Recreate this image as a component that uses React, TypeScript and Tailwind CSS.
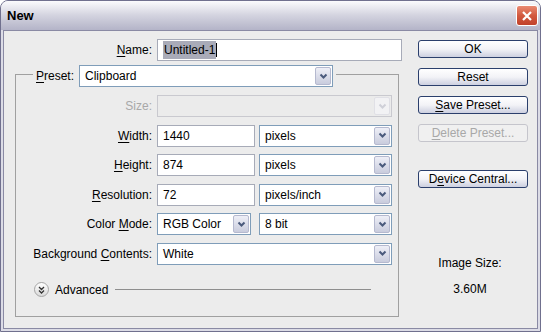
import React from "react";

const Chevron = ({ disabled }: { disabled?: boolean }) => (
  <svg width="9" height="7" viewBox="0 0 9 7">
    <path
      d="M1.5 1.5 L4.5 4.5 L7.5 1.5"
      stroke={disabled ? "#cfd0d8" : "#4a5a7c"}
      strokeWidth="2"
      fill="none"
    />
  </svg>
);

const Select = ({
  value,
  className = "",
  disabled,
}: {
  value?: string;
  className?: string;
  disabled?: boolean;
}) => (
  <div
    className={`flex h-[22px] items-stretch border ${
      disabled ? "border-[#c9c9cf] bg-[#ebebeb]" : "border-[#7f9db9] bg-white"
    } ${className}`}
  >
    <div className="flex flex-1 items-center pl-[5px]">{value}</div>
    <div
      className={`m-[1px] flex w-[16px] items-center justify-center rounded-[2px] border ${
        disabled
          ? "border-[#e0e0e6] bg-[#f2f2f4]"
          : "border-[#b5b9cf] bg-linear-to-b from-[#eeeff7] to-[#c9ccdd]"
      }`}
    >
      <Chevron disabled={disabled} />
    </div>
  </div>
);

const Input = ({ value, className = "" }: { value: string; className?: string }) => (
  <div className={`flex h-[22px] items-center border border-[#a7abb8] bg-white pl-[5px] ${className}`}>
    {value}
  </div>
);

const Row = ({ label, children }: { label: React.ReactNode; children: React.ReactNode }) => (
  <div className="flex h-[22px] items-center">
    <div className="w-[136px] text-right">{label}</div>
    <div className="ml-[5px] flex gap-[4px]">{children}</div>
  </div>
);

const Button = ({
  children,
  disabled,
  className = "",
}: {
  children: React.ReactNode;
  disabled?: boolean;
  className?: string;
}) => (
  <div
    className={`flex h-[18px] w-[110px] items-center justify-center rounded-[3px] border ${
      disabled
        ? "border-[#c5c5cc] bg-[#f0f0f0] text-[#a8a8a8]"
        : "border-[#2b3f6c] bg-linear-to-b from-white via-[#f3f3f7] to-[#cdd0e0]"
    } ${className}`}
  >
    {children}
  </div>
);

const U = ({ children }: { children: React.ReactNode }) => (
  <span className="underline underline-offset-[2px]">{children}</span>
);

export default function App() {
  return (
    <div className="h-[332px] w-[541px] overflow-hidden rounded-t-[8px] border border-[#70708e] bg-[#dcdce6] font-['Liberation_Sans',Arial,sans-serif] text-[12px] text-black">
      {/* title bar */}
      <div className="flex h-[29px] items-center justify-between bg-linear-to-b from-[#fbfbfd] via-[#d3d3df] to-[#b4b4c8] pl-[6px] pr-[2px]">
        <span className="text-[13px] font-bold">New</span>
        <div className="flex h-[21px] w-[22px] items-center justify-center rounded-[3px] border border-white bg-linear-to-b from-[#e98a73] via-[#d2593f] to-[#c1412b]">
          <svg width="12" height="12" viewBox="0 0 12 12">
            <path d="M2 2 L10 10 M10 2 L2 10" stroke="white" strokeWidth="2.2" />
          </svg>
        </div>
      </div>

      <div className="px-[2px] pb-[2px]">
        <div className="flex h-[299px] border border-[#8a8aa4] bg-[#ececec]">
          {/* left column */}
          <div className="w-[404px] pt-[8px]">
            <div className="flex h-[22px] items-center">
              <div className="w-[148px] text-right">
                <U>N</U>ame:
              </div>
              <div className="ml-[5px] flex h-[22px] w-[245px] items-center border border-[#a7abb8] bg-white pl-[5px]">
                <span className="bg-[#a9abb8] px-[1px]">Untitled-1</span>
                <span className="h-[14px] w-[1px] bg-black" />
              </div>
            </div>

            <fieldset className="ml-[11px] w-[384px] border border-[#a0a0a0] pb-[18px]">
              <legend className="ml-[17px] px-[3px] pt-[4px]">
                <div className="flex h-[22px] items-center">
                  <span>
                    <U>P</U>reset:
                  </span>
                  <Select value="Clipboard" className="ml-[5px] w-[254px]" />
                </div>
              </legend>

              <div className="flex flex-col gap-[7.5px] pt-[8px]">
                <Row label={<span className="text-[#a8a8a8]">Size:</span>}>
                  <Select disabled className="w-[235px]" />
                </Row>
                <Row
                  label={
                    <>
                      <U>W</U>idth:
                    </>
                  }
                >
                  <Input value="1440" className="w-[98px]" />
                  <Select value="pixels" className="w-[133px]" />
                </Row>
                <Row
                  label={
                    <>
                      <U>H</U>eight:
                    </>
                  }
                >
                  <Input value="874" className="w-[98px]" />
                  <Select value="pixels" className="w-[133px]" />
                </Row>
                <Row
                  label={
                    <>
                      <U>R</U>esolution:
                    </>
                  }
                >
                  <Input value="72" className="w-[98px]" />
                  <Select value="pixels/inch" className="w-[133px]" />
                </Row>
                <Row
                  label={
                    <>
                      Color <U>M</U>ode:
                    </>
                  }
                >
                  <Select value="RGB Color" className="w-[94px]" />
                  <Select value="8 bit" className="ml-[4px] w-[133px]" />
                </Row>
                <Row
                  label={
                    <>
                      Background <U>C</U>ontents:
                    </>
                  }
                >
                  <Select value="White" className="w-[235px]" />
                </Row>
              </div>

              <div className="mt-[17px] flex h-[16px] items-center pl-[18px]">
                <div className="flex h-[15px] w-[15px] items-center justify-center rounded-full border border-[#a5a5a5] bg-linear-to-b from-white to-[#dadada]">
                  <svg width="7" height="8" viewBox="0 0 7 8">
                    <path d="M1 1 L3.5 3.5 L6 1 M1 4.5 L3.5 7 L6 4.5" stroke="#333" strokeWidth="1.3" fill="none" />
                  </svg>
                </div>
                <span className="ml-[6px]">Advanced</span>
                <div className="ml-[7px] h-[1px] w-[256px] bg-[#8e8e8e]" />
              </div>
            </fieldset>
          </div>

          {/* right column */}
          <div className="flex flex-col pl-[10px] pt-[9px]">
            <Button>OK</Button>
            <Button className="mt-[10px]">Reset</Button>
            <Button className="mt-[10px]">
              <span>
                <U>S</U>ave Preset...
              </span>
            </Button>
            <Button disabled className="mt-[10px]">
              <span>
                <U>D</U>elete Preset...
              </span>
            </Button>
            <Button className="mt-[28px]">
              <span>
                D<U>e</U>vice Central...
              </span>
            </Button>
            <div className="mt-[66px] w-[104px] text-center">Image Size:</div>
            <div className="mt-[8px] w-[104px] text-center">3.60M</div>
          </div>
        </div>
      </div>
    </div>
  );
}
